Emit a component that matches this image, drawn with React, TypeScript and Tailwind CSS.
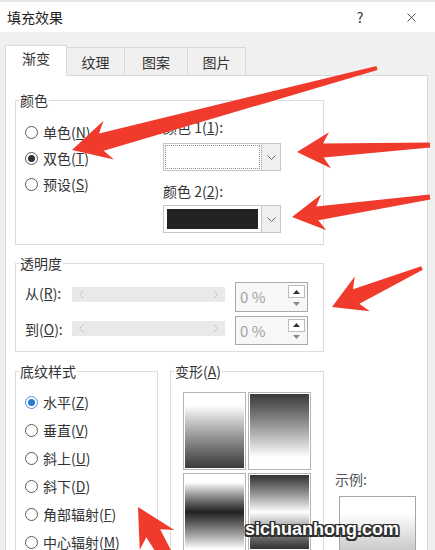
import { X } from 'lucide-react';

type Pt = [number, number];

// polygon for a hand-drawn style arrow: sharp tip, swept barbs, shaft tapering to the tail
function arrowPoints(tip: Pt, tail: Pt, head: number, half: number, neck: number, end: number) {
  const dx = tail[0] - tip[0];
  const dy = tail[1] - tip[1];
  const len = Math.hypot(dx, dy);
  const ux = dx / len;
  const uy = dy / len;
  const nx = -uy;
  const ny = ux;
  const at = (d: number, w: number) =>
    `${(tip[0] + ux * d + nx * w).toFixed(1)},${(tip[1] + uy * d + ny * w).toFixed(1)}`;
  return [
    at(0, 0),
    at(head, half),
    at(head * 0.8, neck),
    at(len, end),
    at(len, -end),
    at(head * 0.8, -neck),
    at(head, -half),
  ].join(' ');
}

const arrows: { tip: Pt; tail: Pt; head: number; half: number; neck: number; end: number }[] = [
  { tip: [72, 150], tail: [377, 68], head: 38, half: 20, neck: 9, end: 2 },
  { tip: [297, 152], tail: [430, 145], head: 33, half: 18, neck: 7, end: 2.5 },
  { tip: [292, 217], tail: [430, 197], head: 32, half: 18, neck: 7, end: 2.5 },
  { tip: [332, 307], tail: [422, 268], head: 33, half: 19, neck: 8, end: 2 },
  { tip: [138, 507], tail: [198, 611], head: 38, half: 20, neck: 8, end: 4 },
];

type RadioProps = {
  label: string;
  hotkey: string;
  checked?: boolean;
  blue?: boolean;
  rowClass: string;
};

function Radio({ label, hotkey, checked, blue, rowClass }: RadioProps) {
  return (
    <div className={`flex items-center gap-[5px] ${rowClass}`}>
      <span
        className={`w-[13px] h-[13px] rounded-full border bg-white flex items-center justify-center shrink-0 ${
          blue ? 'border-[#4a8fd9]' : 'border-[#5a5a5a]'
        }`}
      >
        {checked && (
          <span className={`w-[7px] h-[7px] rounded-full ${blue ? 'bg-[#2a7bd4]' : 'bg-[#333]'}`} />
        )}
      </span>
      <span>
        {label}(<span className="underline">{hotkey}</span>)
      </span>
    </div>
  );
}

function ColorBox({ dark }: { dark?: boolean }) {
  return (
    <div className="flex w-[118px] h-[28px] border border-[#c6c6c6] bg-white">
      <div className={dark ? 'flex-1 p-[3px]' : 'flex-1 p-[1px]'}>
        {dark ? (
          <div className="h-full bg-[#232323]" />
        ) : (
          <div className="h-full border border-dotted border-[#8a8a8a]" />
        )}
      </div>
      <div className="w-[19px] border-l border-[#c6c6c6] bg-[#efefef] flex items-center justify-center">
        <svg width="9" height="5" viewBox="0 0 9 5">
          <path d="M0.5 0.5 L4.5 4.5 L8.5 0.5" fill="none" stroke="#666" strokeWidth="1" />
        </svg>
      </div>
    </div>
  );
}

function Slider() {
  return (
    <div className="mt-[5px] w-[153px] h-[15px] bg-[#e9e9e9] flex items-center justify-between px-[7px]">
      <svg width="5" height="9" viewBox="0 0 5 9">
        <path d="M4.5 0.5 L0.5 4.5 L4.5 8.5" fill="none" stroke="#c4c4c4" />
      </svg>
      <svg width="5" height="9" viewBox="0 0 5 9">
        <path d="M0.5 0.5 L4.5 4.5 L0.5 8.5" fill="none" stroke="#c4c4c4" />
      </svg>
    </div>
  );
}

function Spin({ tall }: { tall?: boolean }) {
  return (
    <div className={`ml-[10px] w-[73px] ${tall ? 'h-[30px]' : 'h-[29px]'} border border-[#a9a9a9] bg-[#f7f7f7] flex p-[2px]`}>
      <div className="flex-1 flex items-center pl-[2px] text-[15px] text-[#a2a2a2]">0 %</div>
      <div className="w-[17px] flex flex-col">
        <div className="flex-1 border border-[#bdbdbd] bg-white flex items-center justify-center">
          <svg width="7" height="4" viewBox="0 0 7 4">
            <path d="M0 4 L3.5 0 L7 4 Z" fill="#333" />
          </svg>
        </div>
        <div className="flex-1 flex items-center justify-center">
          <svg width="7" height="4" viewBox="0 0 7 4">
            <path d="M0 0 L3.5 4 L7 0 Z" fill="#8a8a8a" />
          </svg>
        </div>
      </div>
    </div>
  );
}

export default function App() {
  return (
    <div className="relative w-[435px] h-[550px] overflow-hidden bg-[#f0f0f0] text-[14px] leading-[16px] text-[#333] font-['Noto_Sans_CJK_SC','Noto_Sans',sans-serif]">
      {/* title bar */}
      <div className="h-[32px] bg-white border-t-2 border-[#e6e6e6] flex items-center pl-[7px] pr-[16px]">
        <span className="flex-1 text-[#222]">填充效果</span>
        <span className="w-[14px] text-center mr-[37px] text-[#333]">?</span>
        <X className="w-[15px] h-[15px] text-[#333]" strokeWidth={1.3} />
      </div>

      {/* tabs */}
      <div className="pt-[13px] pl-[5px] flex items-end">
        <div className="relative z-10 -mb-px w-[62px] h-[31px] pb-[6px] bg-white border border-b-0 border-[#d9d9d9] flex items-center justify-center">
          渐变
        </div>
        <div className="w-[58px] h-[28px] border-t border-r border-[#d9d9d9] flex items-center justify-center">
          纹理
        </div>
        <div className="w-[63px] h-[28px] border-t border-r border-[#d9d9d9] flex items-center justify-center">
          图案
        </div>
        <div className="w-[58px] h-[28px] border-t border-r border-[#d9d9d9] flex items-center justify-center">
          图片
        </div>
      </div>

      {/* tab panel */}
      <div className="ml-[5px] w-[423px] h-[520px] bg-white border border-[#d9d9d9] pl-[9px] pt-[16px]">
        <fieldset className="w-[309px] border border-[#dcdcdc] pb-[11px]">
          <legend className="ml-[3px] px-[1px]">颜色</legend>
          <div className="flex">
            <div className="w-[147px] pl-[9px] pt-[11px]">
              <Radio label="单色" hotkey="N" rowClass="h-[26px]" />
              <Radio label="双色" hotkey="T" checked rowClass="h-[26px]" />
              <Radio label="预设" hotkey="S" rowClass="h-[26px]" />
            </div>
            <div className="pt-[11px]">
              <div>
                颜色 1(<span className="underline">1</span>):
              </div>
              <div className="mt-[8px]">
                <ColorBox />
              </div>
              <div className="mt-[12px]">
                颜色 2(<span className="underline">2</span>):
              </div>
              <div className="mt-[6px]">
                <ColorBox dark />
              </div>
            </div>
          </div>
        </fieldset>

        <fieldset className="mt-[10px] w-[309px] border border-[#dcdcdc]">
          <legend className="ml-[3px] px-[1px]">透明度</legend>
          <div className="pl-[9px] pt-[11px] pb-[6px]">
            <div className="flex items-start">
              <div className="w-[47px] pt-[3px]">
                从(<span className="underline">R</span>):
              </div>
              <Slider />
              <Spin tall />
            </div>
            <div className="mt-[4px] flex items-start">
              <div className="w-[47px] pt-[5px]">
                到(<span className="underline">O</span>):
              </div>
              <Slider />
              <Spin />
            </div>
          </div>
        </fieldset>

        <div className="mt-[11px] flex items-start">
          <fieldset className="w-[143px] h-[230px] border border-[#dcdcdc]">
            <legend className="ml-[3px] px-[1px]">底纹样式</legend>
            <div className="pl-[9px] pt-[9px]">
              <Radio label="水平" hotkey="Z" checked blue rowClass="h-[28px]" />
              <Radio label="垂直" hotkey="V" rowClass="h-[28px]" />
              <Radio label="斜上" hotkey="U" rowClass="h-[28px]" />
              <Radio label="斜下" hotkey="D" rowClass="h-[28px]" />
              <Radio label="角部辐射" hotkey="F" rowClass="h-[28px]" />
              <Radio label="中心辐射" hotkey="M" rowClass="h-[28px]" />
            </div>
          </fieldset>

          <fieldset className="ml-[12px] w-[154px] h-[230px] border border-[#dcdcdc]">
            <legend className="ml-[3px] px-[1px]">
              变形(<span className="underline">A</span>)
            </legend>
            <div className="pl-[12px] pt-[13px] grid grid-cols-[63px_63px] gap-x-[2px] gap-y-[3px]">
              <div className="h-[78px] border border-[#b4b4b4] p-[1px] bg-white">
                <div className="h-full bg-linear-to-b from-white from-15% to-[#3a3a3a]" />
              </div>
              <div className="h-[78px] border border-[#b4b4b4] p-[1px] bg-white">
                <div className="h-full bg-linear-to-b from-[#3a3a3a] to-white to-85%" />
              </div>
              <div className="h-[78px] border border-[#b4b4b4] p-[1px] bg-white">
                <div className="h-full bg-linear-to-b from-white from-10% via-[#222] via-50% to-white" />
              </div>
              <div className="h-[78px] border border-[#b4b4b4] p-[1px] bg-white">
                <div className="h-full bg-linear-to-b from-[#333] via-white via-50% to-[#333]" />
              </div>
            </div>
          </fieldset>

          <div className="ml-[11px] pt-[108px] text-[#555]">
            <div>示例:</div>
            <div className="mt-[9px] ml-[4px] w-[77px] h-[80px] border border-[#a6a6a6] bg-linear-to-b from-white from-20% to-[#a9a9a9]" />
          </div>
        </div>
      </div>

      {/* red annotation arrows */}
      <svg className="absolute inset-0 pointer-events-none" width="435" height="550" viewBox="0 0 435 550">
        {arrows.map((a, i) => (
          <polygon
            key={i}
            points={arrowPoints(a.tip, a.tail, a.head, a.half, a.neck, a.end)}
            fill="#f03a2c"
            strokeLinejoin="round"
          />
        ))}
      </svg>

      {/* watermark */}
      <div className="absolute left-[245px] top-[518px] text-[18px] leading-[22px] font-bold text-white font-['Liberation_Sans',sans-serif] [text-shadow:-1.5px_-1.5px_0_#2e2e2e,1.5px_-1.5px_0_#2e2e2e,-1.5px_1.5px_0_#2e2e2e,1.5px_1.5px_0_#2e2e2e,0_1.5px_0_#2e2e2e,0_-1.5px_0_#2e2e2e,1.5px_0_0_#2e2e2e,-1.5px_0_0_#2e2e2e]">
        sichuanhong.com
      </div>
    </div>
  );
}
